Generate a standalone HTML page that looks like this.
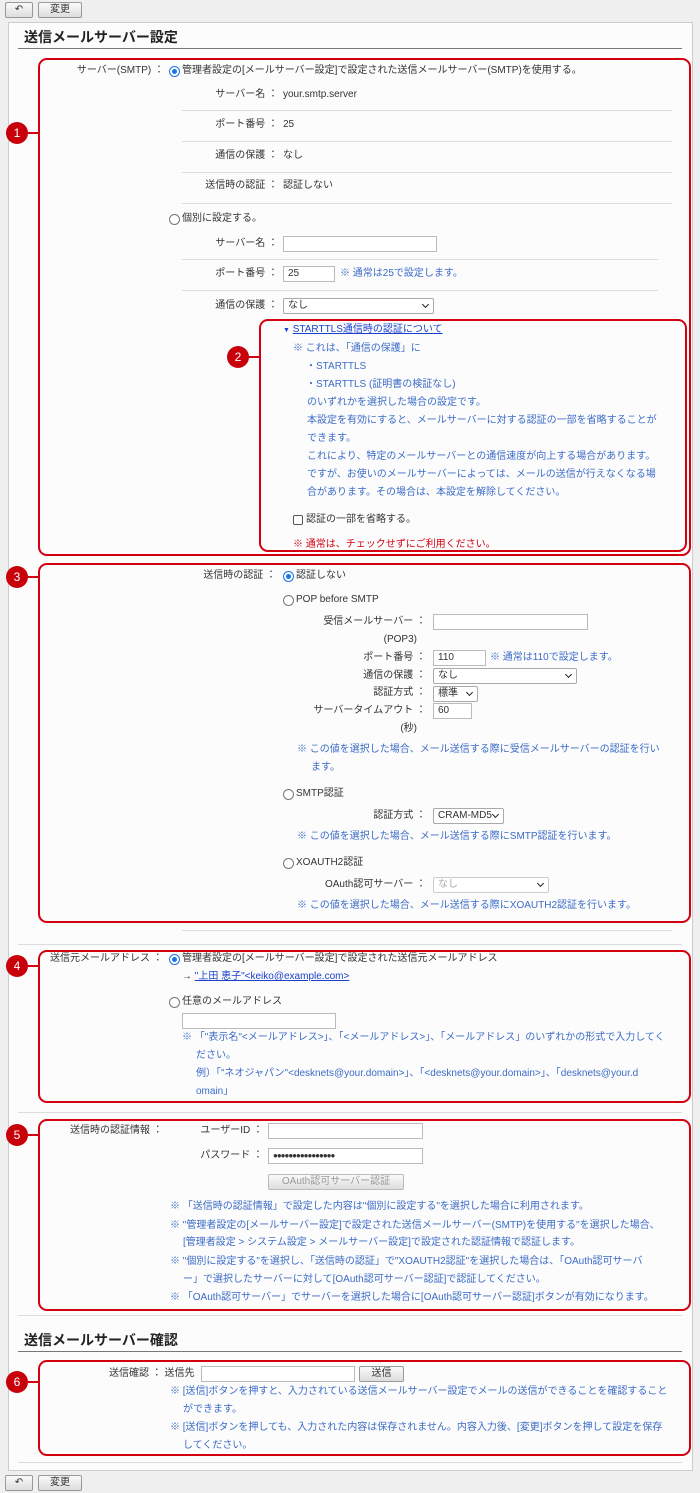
<!DOCTYPE html>
<html><head><meta charset="utf-8">
<style>
*{margin:0;padding:0;box-sizing:border-box}
body{width:700px;height:1493px;background:#efefef;font-family:"Liberation Sans","Noto Sans CJK JP",sans-serif;font-size:10px;color:#333;position:relative;overflow:hidden}
.a{position:absolute}
.t{position:absolute;line-height:14px;white-space:nowrap}
.r{text-align:right}
.n{color:#3b6bc7}
.red{color:#d4000f}
.bx{position:absolute;border:2px solid #d4000f;border-radius:9px}
.c{position:absolute;width:22px;height:22px;border-radius:50%;background:#c8000a;color:#fff;font-size:12px;line-height:22px;text-align:center}
.ln{position:absolute;height:2px;background:#d4000f}
.hr{position:absolute;height:1px;background:#dcdcdc}
.in{position:absolute;background:#fff;border:1px solid #bbb;height:16px;font-size:10px;line-height:14px;padding-left:4px}
.sel{position:absolute;background:#fff;border:1px solid #aaa;height:16px;line-height:14px;padding-left:4px;border-radius:2px}
.sel:after{content:"";position:absolute;right:5px;top:3px;width:4px;height:4px;border-right:1.5px solid #222;border-bottom:1.5px solid #222;transform:rotate(45deg)}
.rad{position:absolute;width:11px;height:11px;border-radius:50%;border:1px solid #777;background:#fff}
.rad.on{border-color:#1a73e8}
.rad.on:after{content:"";position:absolute;left:2px;top:2px;width:5px;height:5px;border-radius:50%;background:#1a73e8}
.btn{position:absolute;border:1px solid #999;border-radius:2px;background:linear-gradient(#fafafa,#ddd);text-align:center;line-height:14px;height:16px}
h2{position:absolute;font-size:14px;font-weight:bold;color:#222}
</style></head><body>
<!-- top bar -->
<div class="btn" style="left:5px;top:2px;width:28px">&#x21B6;</div>
<div class="btn" style="left:38px;top:2px;width:44px">変更</div>
<div class="a" style="left:8px;top:22px;width:685px;height:1449px;background:#fcfcfc;border:1px solid #ccc"></div>
<div class="btn" style="left:5px;top:1475px;width:28px">&#x21B6;</div>
<div class="btn" style="left:38px;top:1475px;width:44px">変更</div>

<h2 style="left:24px;top:27px">送信メールサーバー設定</h2>
<div class="a" style="left:18px;top:48px;width:664px;height:1px;background:#777"></div>

<!-- section 1 -->
<div class="bx" style="left:38px;top:58px;width:653px;height:498px"></div>
<div class="c" style="left:6px;top:122px">1</div><div class="ln" style="left:26px;top:132px;width:13px"></div>
<div class="t r" style="left:40px;top:64px;width:124px">サーバー(SMTP) ：</div>
<div class="rad on" style="left:169px;top:66px"></div>
<div class="t" style="left:182px;top:64px">管理者設定の[メールサーバー設定]で設定された送信メールサーバー(SMTP)を使用する。</div>
<div class="t r" style="left:180px;top:88px;width:98px">サーバー名 ：</div><div class="t" style="left:283px;top:88px">your.smtp.server</div>
<div class="hr" style="left:182px;top:110px;width:490px"></div>
<div class="t r" style="left:180px;top:118px;width:98px">ポート番号 ：</div><div class="t" style="left:283px;top:118px">25</div>
<div class="hr" style="left:182px;top:141px;width:490px"></div>
<div class="t r" style="left:180px;top:149px;width:98px">通信の保護 ：</div><div class="t" style="left:283px;top:149px">なし</div>
<div class="hr" style="left:182px;top:172px;width:490px"></div>
<div class="t r" style="left:170px;top:179px;width:108px">送信時の認証 ：</div><div class="t" style="left:283px;top:179px">認証しない</div>
<div class="hr" style="left:182px;top:203px;width:490px"></div>
<div class="rad" style="left:169px;top:214px"></div>
<div class="t" style="left:182px;top:212px">個別に設定する。</div>
<div class="t r" style="left:180px;top:237px;width:98px">サーバー名 ：</div><div class="in" style="left:283px;top:236px;width:154px"></div>
<div class="hr" style="left:182px;top:259px;width:476px"></div>
<div class="t r" style="left:180px;top:267px;width:98px">ポート番号 ：</div><div class="in" style="left:283px;top:266px;width:52px">25</div>
<div class="t n" style="left:340px;top:267px">※ 通常は25で設定します。</div>
<div class="hr" style="left:182px;top:290px;width:476px"></div>
<div class="t r" style="left:180px;top:299px;width:98px">通信の保護 ：</div><div class="sel" style="left:283px;top:298px;width:151px">なし</div>

<div class="bx" style="left:259px;top:319px;width:428px;height:233px"></div>
<div class="c" style="left:227px;top:346px">2</div><div class="ln" style="left:247px;top:356px;width:13px"></div>
<div class="t" style="left:283px;top:323px;color:#1a3fcf"><span style="font-size:7px">▼</span> <u>STARTTLS通信時の認証について</u></div>
<div class="t n" style="left:293px;top:342px">※ これは、「通信の保護」に</div>
<div class="t n" style="left:306px;top:360px">・STARTTLS</div>
<div class="t n" style="left:306px;top:378px">・STARTTLS (証明書の検証なし)</div>
<div class="t n" style="left:307px;top:396px">のいずれかを選択した場合の設定です。</div>
<div class="t n" style="left:307px;top:414px">本設定を有効にすると、メールサーバーに対する認証の一部を省略することが</div>
<div class="t n" style="left:307px;top:432px">できます。</div>
<div class="t n" style="left:307px;top:450px">これにより、特定のメールサーバーとの通信速度が向上する場合があります。</div>
<div class="t n" style="left:307px;top:468px">ですが、お使いのメールサーバーによっては、メールの送信が行えなくなる場</div>
<div class="t n" style="left:307px;top:486px">合があります。その場合は、本設定を解除してください。</div>
<div class="a" style="left:293px;top:515px;width:10px;height:10px;border:1px solid #555;border-radius:2px;background:#fff"></div>
<div class="t" style="left:306px;top:513px">認証の一部を省略する。</div>
<div class="t red" style="left:293px;top:538px">※ 通常は、チェックせずにご利用ください。</div>

<!-- section 3 -->
<div class="bx" style="left:38px;top:563px;width:653px;height:360px"></div>
<div class="c" style="left:6px;top:566px">3</div><div class="ln" style="left:26px;top:576px;width:13px"></div>
<div class="t r" style="left:170px;top:569px;width:106px">送信時の認証 ：</div>
<div class="rad on" style="left:283px;top:571px"></div><div class="t" style="left:296px;top:569px">認証しない</div>
<div class="rad" style="left:283px;top:595px"></div><div class="t" style="left:296px;top:593px">POP before SMTP</div>
<div class="t r" style="left:290px;top:615px;width:136px">受信メールサーバー ：</div><div class="in" style="left:433px;top:614px;width:155px"></div>
<div class="t r" style="left:350px;top:633px;width:67px">(POP3)</div>
<div class="t r" style="left:300px;top:651px;width:126px">ポート番号 ：</div><div class="in" style="left:433px;top:650px;width:53px">110</div>
<div class="t n" style="left:490px;top:651px">※ 通常は110で設定します。</div>
<div class="t r" style="left:300px;top:669px;width:126px">通信の保護 ：</div><div class="sel" style="left:433px;top:668px;width:144px">なし</div>
<div class="t r" style="left:300px;top:686px;width:126px">認証方式 ：</div><div class="sel" style="left:433px;top:686px;width:45px">標準</div>
<div class="t r" style="left:290px;top:704px;width:136px">サーバータイムアウト ：</div><div class="in" style="left:433px;top:703px;width:39px">60</div>
<div class="t r" style="left:350px;top:722px;width:67px">(秒)</div>
<div class="t n" style="left:297px;top:743px">※ この値を選択した場合、メール送信する際に受信メールサーバーの認証を行い</div>
<div class="t n" style="left:311px;top:761px">ます。</div>
<div class="rad" style="left:283px;top:789px"></div><div class="t" style="left:296px;top:787px">SMTP認証</div>
<div class="t r" style="left:300px;top:809px;width:126px">認証方式 ：</div><div class="sel" style="left:433px;top:808px;width:71px">CRAM-MD5</div>
<div class="t n" style="left:297px;top:830px">※ この値を選択した場合、メール送信する際にSMTP認証を行います。</div>
<div class="rad" style="left:283px;top:858px"></div><div class="t" style="left:296px;top:856px">XOAUTH2認証</div>
<div class="t r" style="left:290px;top:878px;width:136px">OAuth認可サーバー ：</div><div class="sel" style="left:433px;top:877px;width:116px;color:#aaa;border-color:#ccc">なし</div>
<div class="t n" style="left:297px;top:899px">※ この値を選択した場合、メール送信する際にXOAUTH2認証を行います。</div>
<div class="hr" style="left:182px;top:930px;width:490px"></div>
<div class="hr" style="left:18px;top:944px;width:664px"></div>

<!-- section 4 -->
<div class="bx" style="left:38px;top:950px;width:653px;height:153px"></div>
<div class="c" style="left:6px;top:955px">4</div><div class="ln" style="left:26px;top:965px;width:13px"></div>
<div class="t" style="left:50px;top:952px">送信元メールアドレス ：</div>
<div class="rad on" style="left:169px;top:954px"></div>
<div class="t" style="left:182px;top:952px">管理者設定の[メールサーバー設定]で設定された送信元メールアドレス</div>
<div class="t" style="left:182px;top:970px">→ <u style="color:#1a3fcf">"上田 恵子"&lt;keiko@example.com&gt;</u></div>
<div class="rad" style="left:169px;top:997px"></div><div class="t" style="left:182px;top:995px">任意のメールアドレス</div>
<div class="in" style="left:182px;top:1013px;width:154px"></div>
<div class="t n" style="left:182px;top:1031px">※ 「"表示名"&lt;メールアドレス&gt;」、「&lt;メールアドレス&gt;」、「メールアドレス」のいずれかの形式で入力してく</div>
<div class="t n" style="left:196px;top:1049px">ださい。</div>
<div class="t n" style="left:196px;top:1067px">例）「"ネオジャパン"&lt;desknets@your.domain&gt;」、「&lt;desknets@your.domain&gt;」、「desknets@your.d</div>
<div class="t n" style="left:196px;top:1085px">omain」</div>
<div class="hr" style="left:18px;top:1112px;width:664px"></div>

<!-- section 5 -->
<div class="bx" style="left:38px;top:1119px;width:653px;height:192px"></div>
<div class="c" style="left:6px;top:1124px">5</div><div class="ln" style="left:26px;top:1134px;width:13px"></div>
<div class="t" style="left:70px;top:1124px">送信時の認証情報 ：</div>
<div class="t r" style="left:180px;top:1124px;width:83px">ユーザーID ：</div><div class="in" style="left:268px;top:1123px;width:155px"></div>
<div class="t r" style="left:180px;top:1149px;width:83px">パスワード ：</div><div class="in" style="left:268px;top:1148px;width:155px;font-size:8px;letter-spacing:-1px">●●●●●●●●●●●●●●●●</div>
<div class="btn" style="left:268px;top:1174px;width:136px;color:#999;border-color:#bbb">OAuth認可サーバー認証</div>
<div class="t n" style="left:170px;top:1200px">※ 「送信時の認証情報」で設定した内容は"個別に設定する"を選択した場合に利用されます。</div>
<div class="t n" style="left:170px;top:1219px">※ "管理者設定の[メールサーバー設定]で設定された送信メールサーバー(SMTP)を使用する"を選択した場合、</div>
<div class="t n" style="left:183px;top:1236px">[管理者設定 &gt; システム設定 &gt; メールサーバー設定]で設定された認証情報で認証します。</div>
<div class="t n" style="left:170px;top:1255px">※ "個別に設定する"を選択し、「送信時の認証」で"XOAUTH2認証"を選択した場合は、「OAuth認可サーバ</div>
<div class="t n" style="left:183px;top:1273px">ー」で選択したサーバーに対して[OAuth認可サーバー認証]で認証してください。</div>
<div class="t n" style="left:170px;top:1291px">※ 「OAuth認可サーバー」でサーバーを選択した場合に[OAuth認可サーバー認証]ボタンが有効になります。</div>
<div class="hr" style="left:18px;top:1315px;width:664px"></div>

<h2 style="left:24px;top:1330px">送信メールサーバー確認</h2>
<div class="a" style="left:18px;top:1351px;width:664px;height:1px;background:#777"></div>

<!-- section 6 -->
<div class="bx" style="left:38px;top:1360px;width:653px;height:96px"></div>
<div class="c" style="left:6px;top:1371px">6</div><div class="ln" style="left:26px;top:1381px;width:13px"></div>
<div class="t" style="left:109px;top:1367px">送信確認 ： 送信先</div>
<div class="in" style="left:201px;top:1366px;width:154px"></div>
<div class="btn" style="left:359px;top:1366px;width:45px">送信</div>
<div class="t n" style="left:170px;top:1385px">※ [送信]ボタンを押すと、入力されている送信メールサーバー設定でメールの送信ができることを確認すること</div>
<div class="t n" style="left:183px;top:1403px">ができます。</div>
<div class="t n" style="left:170px;top:1421px">※ [送信]ボタンを押しても、入力された内容は保存されません。内容入力後、[変更]ボタンを押して設定を保存</div>
<div class="t n" style="left:183px;top:1439px">してください。</div>
<div class="hr" style="left:18px;top:1462px;width:664px"></div>
</body></html>
